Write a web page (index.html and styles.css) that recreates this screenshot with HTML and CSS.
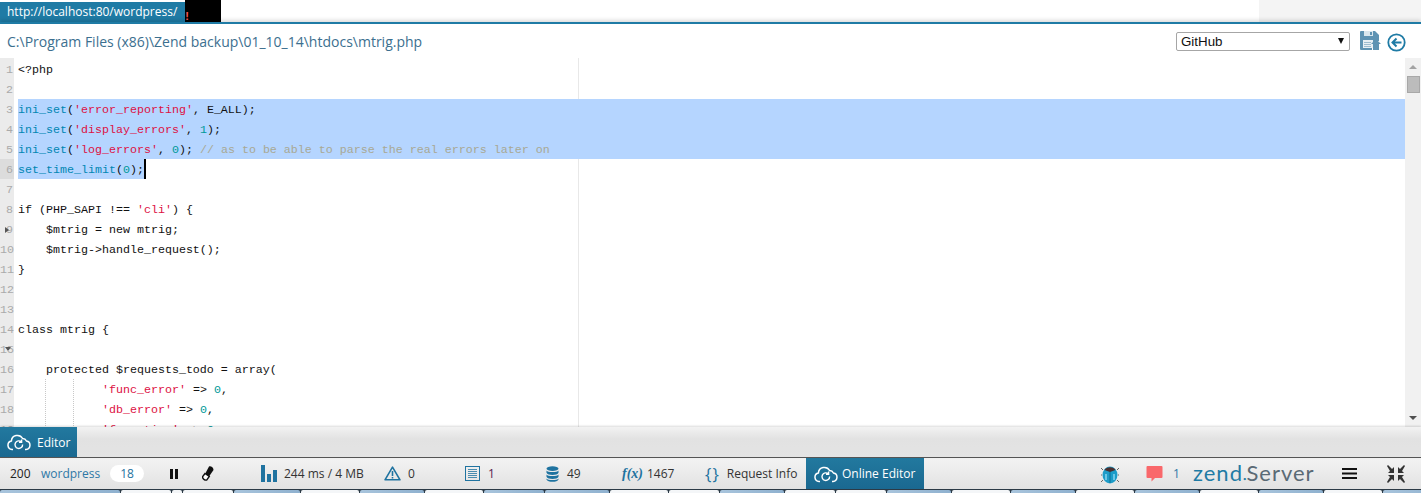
FILE: index.html
```html
<!DOCTYPE html>
<html lang="en">
<head>
<meta charset="utf-8">
<title>Editor</title>
<link rel="stylesheet" href="styles.css">
</head>
<body>
<div class="page">
  <header class="topstrip">
    <div class="urltab">http://localhost:80/wordpress/</div>
    <div class="blackbar"><span class="bang">!</span></div>
    <div class="topfill"></div>
    <div class="topgrey"></div>
  </header>
  <div class="filehead">
    <div class="filepath">C:\Program Files (x86)\Zend backup\01_10_14\htdocs\mtrig.php</div>
    <div class="selectbox"><span>GitHub</span><i class="selectarrow"></i></div>
    <svg class="saveicon" width="21" height="19" viewBox="0 0 21 19"><path d="M0 1a1 1 0 0 1 1-1h14l4 4v6h-3l-4 4v5H1a1 1 0 0 1-1-1z" fill="#5f93b3"/><rect x="4" y="0" width="9" height="5" fill="#dbe7ee"/><rect x="10" y="1" width="2" height="3" fill="#5f93b3"/><rect x="3" y="9" width="10" height="8" fill="#e8eff4"/><path d="M4 11.500h7M4 13.500h7M4 15.500h7" stroke="#9dbccf"/><path d="M16 8l5 5h-2v6h-6v-6h-2z" fill="#5f93b3"/></svg>
    <svg class="backicon" width="19" height="19" viewBox="0 0 19 19"><circle cx="9.500" cy="9.500" r="8.200" fill="none" stroke="#1f7ba5" stroke-width="1.800"/><path d="M14.500 9.500H6M9.500 5.500l-4 4 4 4" fill="none" stroke="#1f7ba5" stroke-width="2"/></svg>
  </div>
  <main class="editor">
    <div class="gutter">
      <div>1</div><div>2</div><div>3</div><div>4</div><div>5</div><div class="active">6</div><div>7</div><div>8</div><div class="fold">9</div><div>10</div><div>11</div><div>12</div><div>13</div><div>14</div><div class="fold open">15</div><div>16</div><div>17</div><div>18</div><div>19</div>
    </div>
    <div class="code">
      <div class="margin"></div>
      <div class="ln">&lt;?php</div>
      <div class="ln"></div>
      <div class="ln sel"><span class="f">ini_set</span>(<span class="s">'error_reporting'</span>, E_ALL);</div>
      <div class="ln sel"><span class="f">ini_set</span>(<span class="s">'display_errors'</span>, <span class="n">1</span>);</div>
      <div class="ln sel"><span class="f">ini_set</span>(<span class="s">'log_errors'</span>, <span class="n">0</span>); <span class="c">// as to be able to parse the real errors later on</span></div>
      <div class="ln"><span class="selpart"><span class="f">set_time_limit</span>(<span class="n">0</span>);</span></div>
      <div class="ln"></div>
      <div class="ln">if (PHP_SAPI !== <span class="s">'cli'</span>) {</div>
      <div class="ln">    $mtrig = new mtrig;</div>
      <div class="ln">    $mtrig-&gt;handle_request();</div>
      <div class="ln">}</div>
      <div class="ln"></div>
      <div class="ln"></div>
      <div class="ln">class mtrig {</div>
      <div class="ln"></div>
      <div class="ln">    protected $requests_todo = array(</div>
      <div class="ln guides">            <span class="s">'func_error'</span> =&gt; <span class="n">0</span>,</div>
      <div class="ln guides">            <span class="s">'db_error'</span> =&gt; <span class="n">0</span>,</div>
      <div class="ln guides">            <span class="s">'func_time'</span> =&gt; <span class="n">0</span>,</div>
    </div>
    <div class="vscroll">
      <i class="arrow up"></i>
      <div class="track"><div class="thumb"></div></div>
      <i class="arrow down"></i>
    </div>
  </main>
  <div class="tabpanel">
    <div class="editortab">
      <svg width="24" height="18" viewBox="0 0 24 18"><path d="M6 16.500H5a4.300 4.300 0 0 1-.6-8.500A6 6 0 0 1 15.600 5.500 4.600 4.600 0 0 1 19.500 8a4.300 4.300 0 0 1-.5 8.500h-1" fill="none" stroke="#fff" stroke-width="1.500"/><path d="M15.600 11.500a3.800 3.800 0 1 1-1.200-2.600M14.600 6.600v2.600h-2.600" fill="none" stroke="#fff" stroke-width="1.400"/></svg>
      <span>Editor</span>
    </div>
  </div>
  <footer class="toolbar">
    <span class="status">200</span>
    <span class="app">wordpress</span>
    <span class="pill">18</span>
    <svg class="pause" width="10" height="12" viewBox="0 0 10 12"><path d="M1 1h3v10H1zM6 1h3v10H6z" fill="#111"/></svg>
    <svg class="eraser" width="12" height="15" viewBox="0 0 12 15"><path d="M7 .5c2-.6 4.500 1 4.500 3.500L7 10.500 3 8z" fill="#111"/><path d="M3 7.500l4.300 3-2.500 3.500c-2 .5-4.300-1.200-4.300-3.300z" fill="#fff" stroke="#111" stroke-width="1.400"/></svg>
    <span class="metric m-time">
      <svg width="16" height="17" viewBox="0 0 16 17"><path d="M0 0h4v17H0zM6 9h4v8H6zM12 5h4v12h-4z" fill="#1f73a0"/></svg>
      <span>244 ms / 4 MB</span>
    </span>
    <span class="metric m-warn">
      <svg width="17" height="15" viewBox="0 0 17 15"><path d="M8.500 1.200L16 13.800H1z" fill="none" stroke="#1f73a0" stroke-width="1.600" stroke-linejoin="round"/><path d="M8.500 5v5M8.500 11v1.600" stroke="#1f73a0" stroke-width="1.600"/></svg>
      <span>0</span>
    </span>
    <span class="metric m-log">
      <svg width="15" height="15" viewBox="0 0 15 15"><rect x=".5" y=".5" width="14" height="14" fill="none" stroke="#1f73a0"/><path d="M3 3.500h9M3 5.500h9M3 7.500h9M3 9.500h9M3 11.500h9" stroke="#1f73a0" stroke-width=".8"/></svg>
      <span>1</span>
    </span>
    <span class="metric m-db">
      <svg width="13" height="16" viewBox="0 0 13 16"><ellipse cx="6.500" cy="2.600" rx="6" ry="2.400" fill="#1f73a0"/><path d="M.5 4.400c1 2 11 2 12 0v2.300c-1 3-11 3-12 0zM.5 8.400c1 2 11 2 12 0v2.300c-1 3-11 3-12 0zM.5 12.400c1 2 11 2 12 0v1c-1 3.200-11 3.200-12 0z" fill="#1f73a0"/></svg>
      <span>49</span>
    </span>
    <span class="metric m-fx">
      <span class="fx">f(x)</span>
      <span>1467</span>
    </span>
    <span class="metric m-req">
      <span class="braces">{}</span>
      <span>Request Info</span>
    </span>
    <span class="onlinetab">
      <svg width="24" height="18" viewBox="0 0 24 18"><path d="M6 16.500H5a4.300 4.300 0 0 1-.6-8.500A6 6 0 0 1 15.600 5.500 4.600 4.600 0 0 1 19.500 8a4.300 4.300 0 0 1-.5 8.500h-1" fill="none" stroke="#fff" stroke-width="1.500"/><path d="M15.600 11.500a3.800 3.800 0 1 1-1.200-2.600M14.600 6.600v2.600h-2.600" fill="none" stroke="#fff" stroke-width="1.400"/></svg>
      <span>Online Editor</span>
    </span>
    <span class="spring"></span>
    <svg class="bug" width="18" height="20" viewBox="0 0 18 20"><path d="M2 6L0 4M16 6l2-2M1 11H0M17 11h1M2 16l-2 2M16 16l2 2" stroke="#666"/><ellipse cx="9" cy="11" rx="7.500" ry="8.500" fill="#1d9cc8"/><path d="M3.500 6a6 4.500 0 0 1 11 0L9 8z" fill="#4a2f2f"/><path d="M9 8v11" stroke="#0c6f95"/><path d="M5 10v6M13 10v6" stroke="#6cc7e6" stroke-width="2"/></svg>
    <svg class="chat" width="17" height="18" viewBox="0 0 17 18"><path d="M1.500 1h14a1 1 0 0 1 1 1v10a1 1 0 0 1-1 1H9l-3.500 3.500V13h-4a1 1 0 0 1-1-1V2a1 1 0 0 1 1-1z" fill="#f9686b"/></svg>
    <span class="chatcount">1</span>
    <span class="logo"><span class="zend">zend</span><sup class="dot">•</sup><span class="server">Server</span></span>
    <svg class="menu" width="15" height="11" viewBox="0 0 15 11"><path d="M0 0h15v2H0zM0 4.500h15v2H0zM0 9h15v2H0z" fill="#111"/></svg>
    <svg class="shrink" width="18" height="18" viewBox="0 0 18 18"><path d="M0 1l1-1 4 4 2-2v6H1l2-2zM18 1l-1-1-4 4-2-2v6h6l-2-2zM0 17l1 1 4-4 2 2v-6H1l2 2zM18 17l-1 1-4-4-2 2v-6h6l-2 2z" fill="#333"/></svg>
  </footer>
  <div class="tasks">
    <i class="b w120"></i><i class="w w50"></i><i class="w w10"></i><i class="w w50"></i><i class="b w66"></i><i class="w w58"></i><i class="b w64"></i><i class="w w58"></i><i class="b w60"></i><i class="b w64"></i><i class="w w58"></i><i class="w w50"></i><i class="b w64"></i><i class="w w50"></i><i class="w w50"></i><i class="b w64"></i><i class="w w58"></i><i class="b w64"></i><i class="w w58"></i><i class="b w64"></i><i class="w w58"></i><i class="b w64"></i><i class="w w58"></i><i class="b w64"></i><i class="w w58"></i>
  </div>
</div>
</body>
</html>
```
FILE: styles.css
```css
* { box-sizing: border-box; }
html, body { margin: 0; padding: 0; height: 100%; overflow: hidden; background: #fff; }
.page { width: 1421px; height: 493px; display: flex; flex-direction: column; font-family: "Open Sans", sans-serif; }

.topstrip { height: 22px; display: flex; flex: none; }
.urltab { width: 185px; margin-top: 2px; background: #1f7ba5; color: #fff; font-size: 12px; line-height: 20px; padding-left: 7px; white-space: nowrap; }
.blackbar { width: 36px; background: #000; position: relative; }
.bang { position: absolute; left: 0; bottom: 0; width: 4px; text-align: center; font: bold 11px/11px "Liberation Sans", sans-serif; color: #ff5a5a; }
.topfill { flex: 1; }
.topgrey { width: 162px; background: #f4f4f4; }

.filehead { flex: none; height: 36px; border-top: 2px solid #1f7ba5; display: flex; align-items: center; padding-right: 15px; background: #fff; box-shadow: 0 -2px 4px rgba(0,0,0,.14); position: relative; }
.filepath { flex: 1; padding-left: 7px; font-size: 14px; color: #3c6f8f; white-space: nowrap; }
.selectbox { width: 174px; height: 19px; border: 1px solid #a6a6a6; border-radius: 2px; padding: 0 5px 0 4px; display: flex; justify-content: space-between; align-items: center; font: 13.33px "Liberation Sans", sans-serif; color: #111; }
.selectarrow { width: 0; height: 0; border-left: 3.5px solid transparent; border-right: 3.5px solid transparent; border-top: 6px solid #111; }
.saveicon { margin-left: 10px; margin-top: -1px; }
.backicon { margin-left: 6px; margin-top: 2px; }

.editor { flex: none; height: 369px; display: flex; overflow: hidden; position: relative; background: #fff; font-family: "Liberation Mono", monospace; font-size: 11.67px; line-height: 22px; }
.gutter { width: 14px; flex: none; background: #ebebeb; color: #aaa; text-align: right; padding: 1px 1px 0 0; }
.gutter div { height: 20px; margin-right: -1px; padding-right: 1px; }
.gutter .active { background: #dcdcdc; }
.gutter .fold { position: relative; }
.gutter .fold::before { content: ""; position: absolute; left: 5px; top: 8px; width: 0; height: 0; border-top: 3px solid transparent; border-bottom: 3px solid transparent; border-left: 4px solid #555; }
.gutter .fold.open::before { left: 5px; border-left: 3px solid transparent; border-right: 3px solid transparent; border-top: 4px solid #555; border-bottom: 0; }
.code { flex: 1; position: relative; padding: 1px 0 0 4px; color: #111; overflow: hidden; }
.margin { position: absolute; left: 564px; top: 0; bottom: 0; width: 1px; background: #e8e8e8; }
.ln { height: 20px; position: relative; white-space: pre; }
.sel { background: #b5d5ff; }
.selpart { display: inline-block; height: 20px; background: #b5d5ff; border-right: 2px solid #000; vertical-align: top; }
.guides { background-image: linear-gradient(#c8c8c8 50%, transparent 50%), linear-gradient(#c8c8c8 50%, transparent 50%); background-size: 1px 2px, 1px 2px; background-position: 27px 0, 55px 0; background-repeat: repeat-y; }
.f { color: #0086b3; }
.s { color: #d14; }
.n { color: #099; }
.c { color: #a8a894; }

.vscroll { width: 16px; flex: none; background: #f1f1f1; display: flex; flex-direction: column; align-items: center; }
.arrow { flex: none; height: 18px; width: 16px; position: relative; }
.arrow::after { content: ""; position: absolute; left: 4px; top: 7px; border-left: 4px solid transparent; border-right: 4px solid transparent; }
.arrow.up::after { border-bottom: 4px solid #a3a3a3; }
.arrow.down::after { border-top: 4px solid #505050; }
.track { flex: 1; width: 100%; padding: 0 1px 0 2px; }
.thumb { height: 17px; background: #bcbcbc; border: 1px solid #a8a8a8; }

.tabpanel { flex: none; height: 31px; background: linear-gradient(#f2f2f2, #e2e2e2 40%, #e4e4e4); border-bottom: 1px solid #555; box-shadow: 0 -1px 2px rgba(0,0,0,.15); position: relative; }
.editortab { width: 77px; height: 30px; background: linear-gradient(#22799f, #1a6890); color: #fff; font-size: 12px; display: flex; align-items: center; gap: 6px; padding-left: 7px; }
.editortab svg, .onlinetab svg { flex: none; }

.toolbar { flex: none; height: 31px; background: linear-gradient(#f3f3f3, #e2e2e2); display: flex; align-items: center; font-size: 12px; color: #333; white-space: nowrap; }
.status { margin-left: 10px; width: 31px; color: #222; }
.app { width: 69px; color: #2f78a6; }
.pill { width: 34px; height: 17px; line-height: 17px; text-align: center; background: #fff; border-radius: 9px; color: #1f73a0; }
.pause { margin-left: 25px; }
.eraser { margin-left: 23px; }
.metric { display: flex; align-items: center; flex: none; }
.m-time { margin-left: 47px; width: 123px; gap: 7px; }
.m-time svg { margin-top: -1px; }
.m-warn { width: 81px; gap: 7px; }
.m-log { width: 81px; gap: 8px; color: #5a2050; }
.m-db { width: 76px; gap: 8px; }
.m-fx { width: 83px; gap: 4px; }
.fx { font: italic bold 14px "Liberation Serif", serif; color: #1f73a0; }
.m-req { width: 101px; gap: 7px; }
.braces { font: 17px "Open Sans", sans-serif; color: #1f73a0; letter-spacing: 1px; line-height: 20px; }
.onlinetab { flex: none; width: 118px; height: 31px; background: linear-gradient(#22799f, #1a6890); color: #fff; display: flex; align-items: center; gap: 4px; padding-left: 8px; }
.spring { flex: 1; }
.bug { margin-right: 27px; }
.chat { margin-right: 10px; margin-top: 1px; }
.chatcount { width: 20px; color: #2f78a6; }
.logo { display: flex; align-items: baseline; font-family: "Lato", sans-serif; font-size: 22px; letter-spacing: 1px; width: 149px; line-height: 24px; margin-top: -2px; }
.zend { color: #1f7ba5; }
.dot { font-size: 6px; color: #1f7ba5; line-height: 0; vertical-align: top; letter-spacing: 0; }
.server { color: #5a6a75; }
.menu { margin-right: 30px; }
.shrink { margin-right: 16px; }

.tasks { flex: 1; display: flex; overflow: hidden; background: #2c3a46; padding-top: 1px; gap: 1px; }
.tasks i { flex: none; display: block; height: 3px; border-radius: 2px 2px 0 0; }
.tasks .b { background: linear-gradient(90deg, #a8c4dc, #8fb1cf); }
.tasks .w { background: #f4f6f8; }
.w10 { width: 10px; }
.w50 { width: 50px; }
.w58 { width: 58px; }
.w60 { width: 60px; }
.w64 { width: 64px; }
.w66 { width: 66px; }
.w120 { width: 120px; }
```
